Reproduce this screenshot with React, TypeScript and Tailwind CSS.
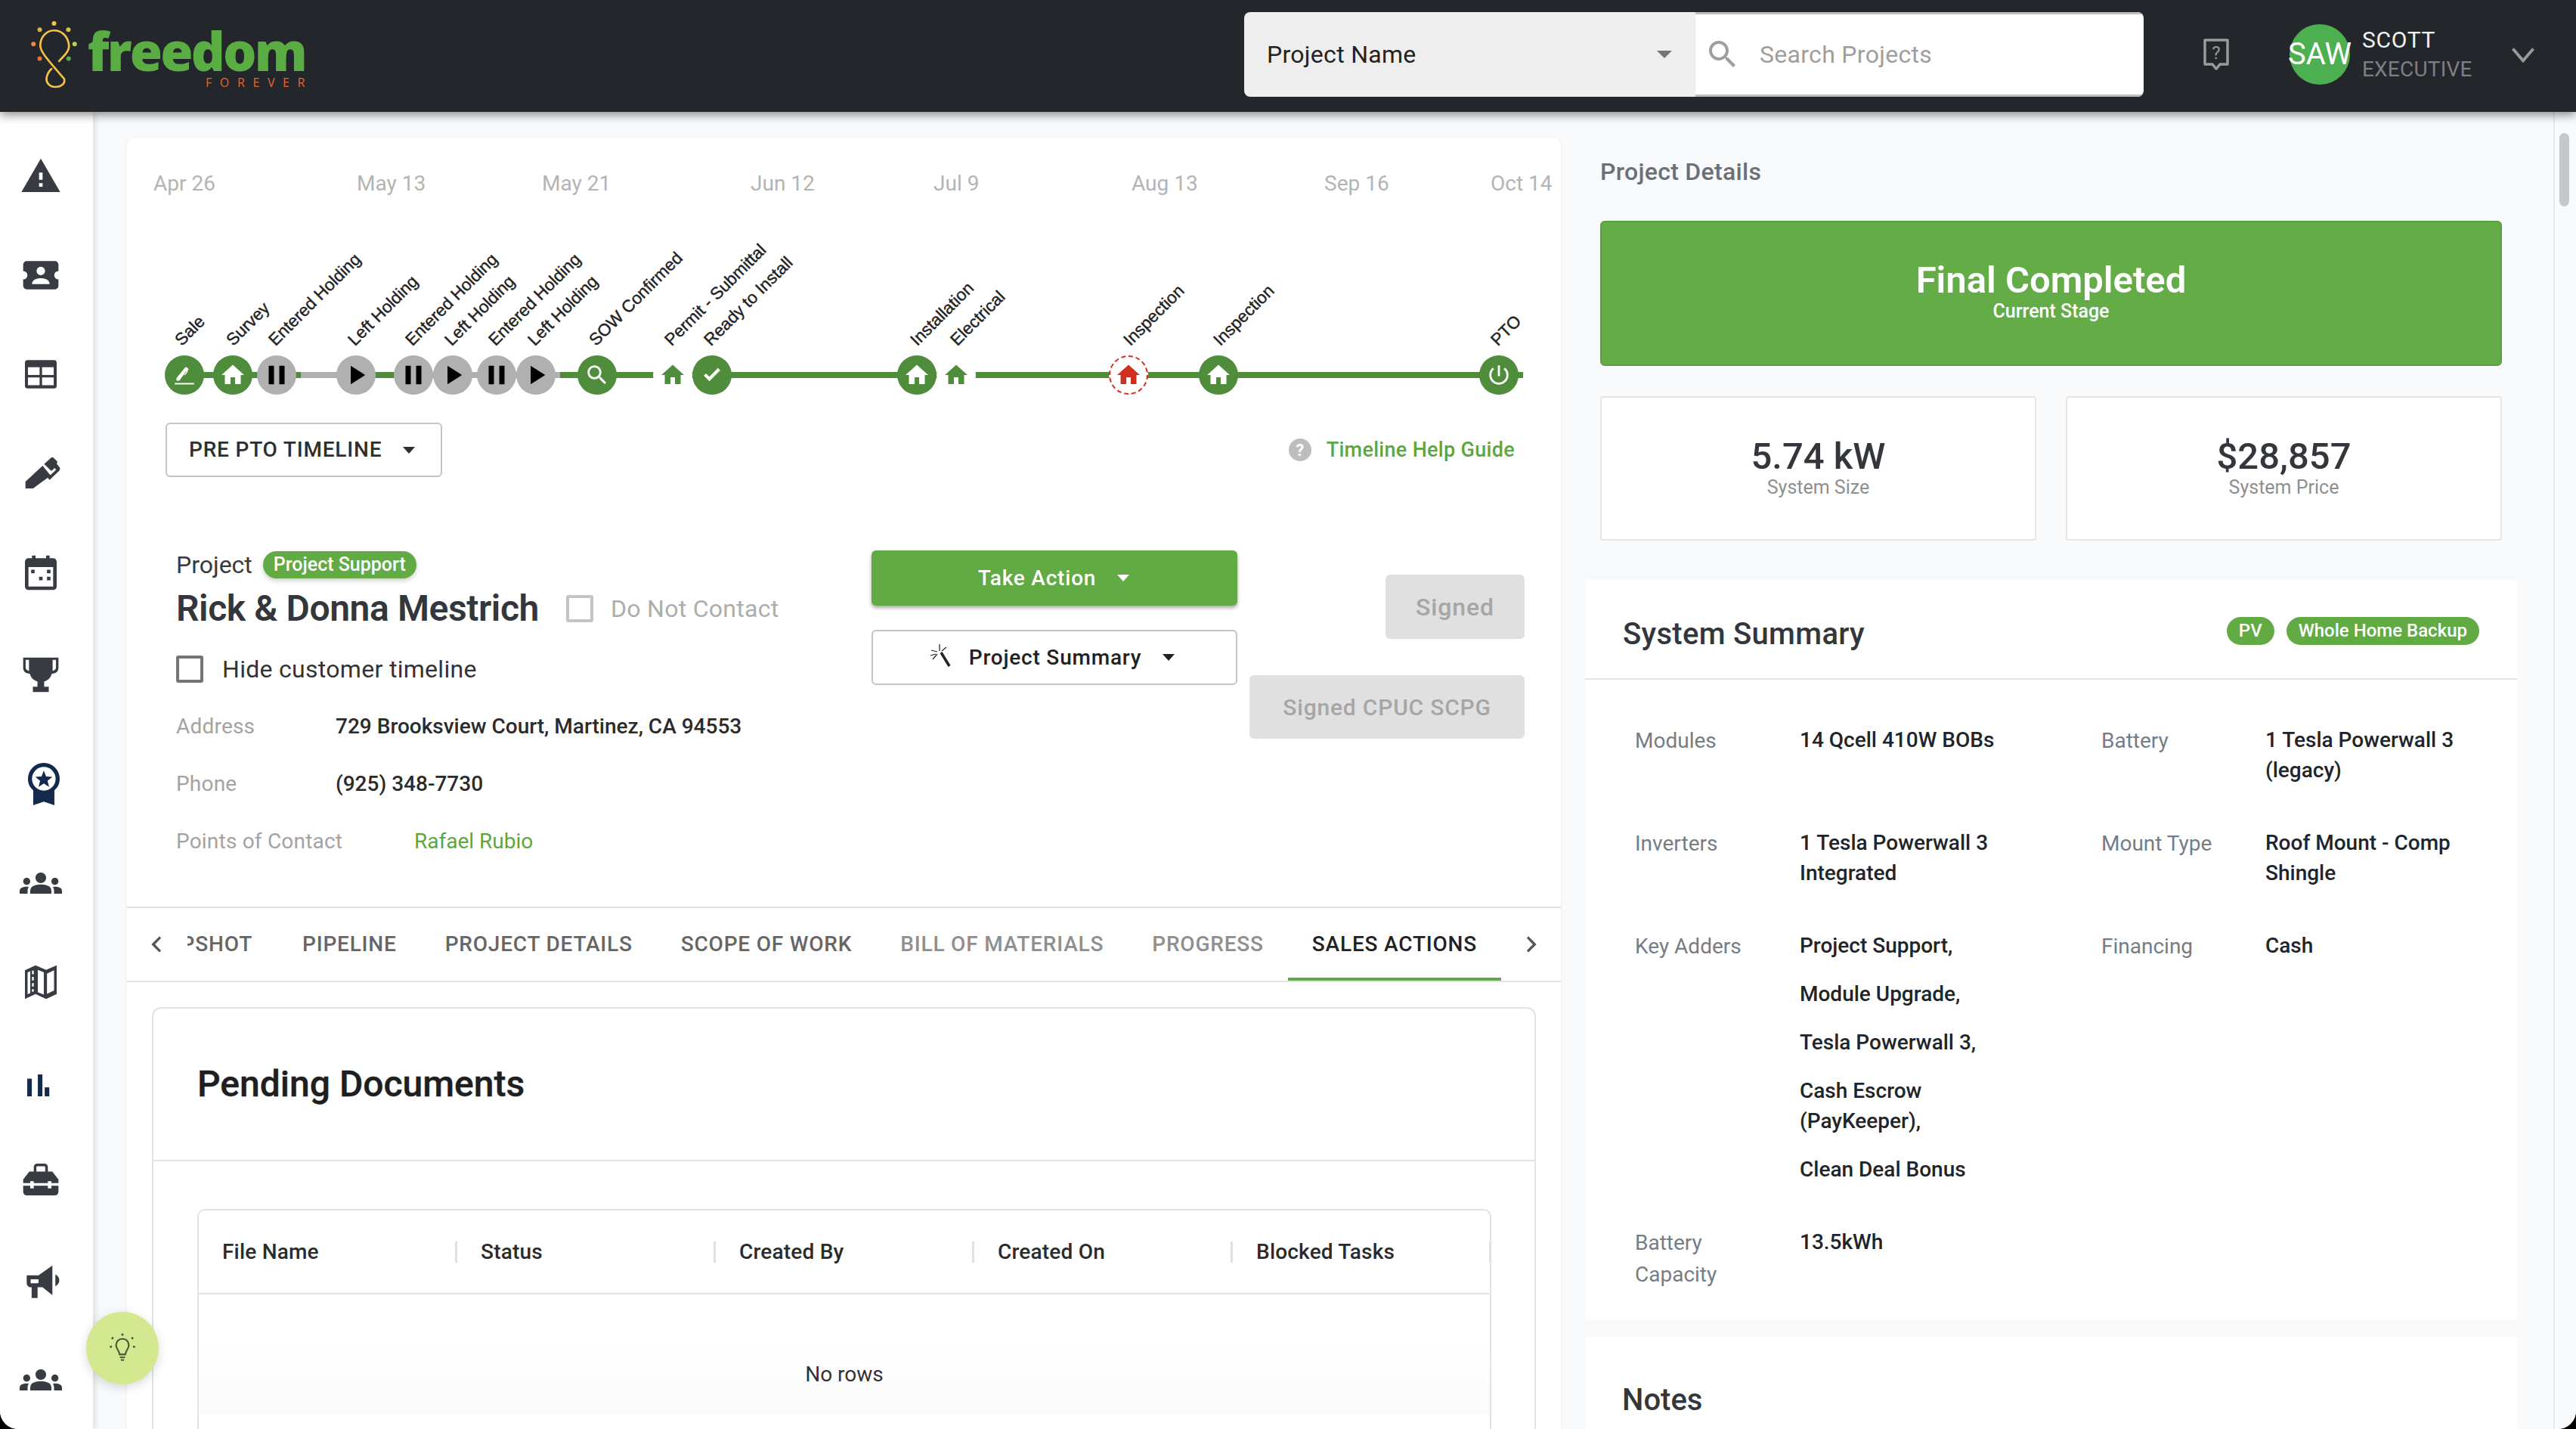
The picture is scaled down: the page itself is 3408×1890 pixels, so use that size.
import type { ReactNode } from "react";

const HOME = "M10 20v-6h4v6h5v-8h3L12 3 2 12h3v8z";
const PAUSE = "M6 19h4V5H6v14zm8-14v14h4V5h-4z";
const PLAY = "M8 5v14l11-7z";
const CHECK = "M9.500 17.800 4.300 12.600l2.100-2.100 3.100 3.100 8-8.200 2.200 2.100z";
const POWER =
  "M13 3h-2v10h2V3zm4.83 2.17-1.42 1.42C17.99 7.86 19 9.81 19 12c0 3.87-3.13 7-7 7s-7-3.13-7-7c0-2.19 1.01-4.14 2.58-5.42L6.17 5.17C4.23 6.82 3 9.26 3 12c0 4.97 4.03 9 9 9s9-4.03 9-9c0-2.74-1.23-5.18-3.17-6.83z";
const SEARCH =
  "M15.5 14h-.79l-.28-.27C15.41 12.59 16 11.11 16 9.5 16 5.91 13.09 3 9.5 3S3 5.91 3 9.5 5.91 16 9.5 16c1.61 0 3.09-.59 4.23-1.57l.27.28v.79l5 4.99L20.49 19l-4.99-5zm-6 0C7.01 14 5 11.99 5 9.5S7.01 5 9.5 5 14 7.01 14 9.5 11.99 14 9.5 14z";
const PEOPLE =
  "M4 13c1.1 0 2-.9 2-2s-.9-2-2-2-2 .9-2 2 .9 2 2 2zm1.13 1.1c-.37-.06-.74-.1-1.13-.1-.99 0-1.93.21-2.78.58C.48 14.9 0 15.62 0 16.43V18h4.5v-1.61c0-.83.23-1.61.63-2.29zM20 13c1.1 0 2-.9 2-2s-.9-2-2-2-2 .9-2 2 .9 2 2 2zm4 3.43c0-.81-.48-1.53-1.22-1.85-.85-.37-1.79-.58-2.78-.58-.39 0-.76.04-1.13.1.4.68.63 1.46.63 2.29V18H24v-1.57zm-7.76-2.78c-1.17-.52-2.61-.9-4.24-.9-1.63 0-3.07.39-4.24.9C6.68 14.13 6 15.21 6 16.39V18h12v-1.61c0-1.18-.68-2.26-1.76-2.74zM12 12c1.66 0 3-1.34 3-3s-1.34-3-3-3-3 1.34-3 3 1.34 3 3 3z";

function Icon({ d, className }: { d: string; className?: string }) {
  return (
    <svg viewBox="0 0 24 24" fill="currentColor" className={className}>
      <path d={d} />
    </svg>
  );
}

function SideIcon({ children, className }: { children: ReactNode; className?: string }) {
  return (
    <div className={"flex h-[60px] w-full shrink-0 items-center justify-center text-[#383c42] " + (className ?? "")}>
      <svg viewBox="0 0 24 24" fill="currentColor" className="h-14 w-14">
        {children}
      </svg>
    </div>
  );
}

function Sidebar() {
  return (
    <div className="z-10 flex h-full w-[123px] shrink-0 flex-col gap-[71px] bg-white pt-[55px] pr-[15px] shadow-[3px_0_8px_rgba(0,0,0,0.12)]">
      <SideIcon>
        <path d="M1 21h22L12 2 1 21zm12-3h-2v-2h2v2zm0-4h-2v-4h2v4z" />
      </SideIcon>
      <SideIcon>
        <path d="M4 4h16a2 2 0 0 1 2 2v3.600a2.400 2.400 0 0 0 0 4.800V18a2 2 0 0 1-2 2H4a2 2 0 0 1-2-2v-3.600a2.400 2.400 0 0 0 0-4.800V6a2 2 0 0 1 2-2z" />
        <circle cx="12" cy="9.600" r="2.400" fill="#fff" />
        <path d="M7 17c0-2.400 2.500-3.300 5-3.300s5 .9 5 3.300z" fill="#fff" />
      </SideIcon>
      <SideIcon>
        <rect x="3" y="4" width="18" height="16" rx="1.500" />
        <rect x="4.700" y="8" width="6.600" height="4.400" fill="#fff" />
        <rect x="12.700" y="8" width="6.600" height="4.400" fill="#fff" />
        <rect x="4.700" y="13.800" width="6.600" height="4.400" fill="#fff" />
        <rect x="12.700" y="13.800" width="6.600" height="4.400" fill="#fff" />
      </SideIcon>
      <SideIcon>
        <path d="M3.300 20.600v-3.900L13 7.700l4.600 5.600-10 7.300z" />
        <path d="M13.900 6.800 18 3h1l2.500 2.500-.5 1 1.900 2.500-.2 1.300-5.700 5.400-1.200-1.200 4.900-4.500-.9-1-1.800 1.700z" />
      </SideIcon>
      <SideIcon>
        <path d="M7 2.500h2V4h6V2.500h2V4h2a2 2 0 0 1 2 2v14a2 2 0 0 1-2 2H5a2 2 0 0 1-2-2V6a2 2 0 0 1 2-2h2zM5 9v11h14V9z" />
        <rect x="6.500" y="10.500" width="2" height="2" />
        <rect x="15.500" y="10.500" width="2" height="2" />
        <rect x="11" y="14.500" width="2" height="2" />
        <rect x="15.500" y="14.500" width="2" height="2" />
      </SideIcon>
      <SideIcon className="mt-[4px]">
        <path d="M2 2.500h20v5.500c0 1.500-.5 2.700-2 3.200l-1.800.5c-.6 2.200-2 3.700-4.300 4.300V19h2.600v3H7.500v-3h2.600v-3c-2.300-.6-3.700-2.100-4.300-4.300L4 11.200C2.500 10.700 2 9.500 2 8zm1.400 1.200V8c0 .8.300 1.400 1.900 2V3.700zm17.200 0h-1.900V10c1.600-.6 1.900-1.200 1.900-2z" />
      </SideIcon>
      <SideIcon className="mt-[14px] !text-[#132a4e]">
        <g transform="translate(1.700 0)">
          <path d="M3 9a9 9 0 1 1 18 0c0 3-1.200 5-3 6.500V24l-6-2-6 2v-8.500C4.200 14 3 12 3 9z" />
          <circle cx="12" cy="9" r="6.700" fill="#fff" />
          <path d="m12 4.400 1.300 3.300 3.500.2-2.700 2.300.9 3.400-3-1.900-3 1.900.9-3.400-2.700-2.300 3.500-.2z" />
        </g>
      </SideIcon>
      <SideIcon>
        <path d={PEOPLE} />
      </SideIcon>
      <SideIcon>
        <path d="M3 5.300 9 2.500l6 2.500 6-2.500v16.200L15 21.500l-6-2.700-6 2.700z" />
        <path d="M4.500 6.500v12.400l1.500-.7V5.800zM7 5.500v2h1v-2zM7 9v2h1V9zM7 12.500v2h1v-2zM7 16v1.600l1-.4V16z" fill="#fff" />
        <path d="M10.300 5v12.700l3.400 1.400V6.400zM15.500 7.200v11.400l4-1.900V5.300z" fill="#fff" />
      </SideIcon>
      <SideIcon className="mt-[6px] !text-[#132a4e]">
        <rect x="4.300" y="8" width="2.600" height="10" />
        <rect x="10.300" y="5.600" width="2.600" height="12.400" />
        <rect x="14.200" y="12.900" width="2.600" height="5.100" />
      </SideIcon>
      <SideIcon className="-mt-[7px]">
        <path d="M8 5a2 2 0 0 1 2-2h4a2 2 0 0 1 2 2v2.500h2.500L22 12v2h-4v-1h-2v1H8v-1H6v1H2v-2l3.500-4.500H8zm1.500 2.500h5V5a.5.5 0 0 0-.5-.5h-4a.5.5 0 0 0-.5.5zM2 15.500h4V17h2v-1.500h8V17h2v-1.500h4V19a2 2 0 0 1-2 2H4a2 2 0 0 1-2-2z" />
      </SideIcon>
      <SideIcon className="mt-[2px]">
        <g transform="translate(1.200 -1.300) scale(1.12)">
          <path d="M2.500 9.500h6L15.500 4.500v15L10.500 15.500H8V21H5v-5.500H4.500a2 2 0 0 1-2-2zm2 2v2H7.500l1-.2v-1.800zM17 9c1.300.6 2 1.700 2 3s-.7 2.400-2 3z" fillRule="evenodd" />
        </g>
      </SideIcon>
      <SideIcon className="mt-[1px]">
        <path d={PEOPLE} />
      </SideIcon>
    </div>
  );
}

function Logo() {
  return (
    <div className="flex items-start self-start pl-[38px]">
      <svg viewBox="50 50 200 280" className="mt-[27px] h-[93px] w-[67px]" fill="none">
        <path
          d="M170 212 L196 184 C208 170 212 156 208 140 C200 106 175 90 150 90 C120 90 96 115 95 150 C96 172 110 190 190 282 C196 300 180 315 155 315 C130 315 118 296 120 280 C122 268 130 252 140 243"
          stroke="#f5c244"
          strokeWidth="8"
          strokeLinecap="round"
        />
        <circle cx="150" cy="62" r="9" fill="#f5c244" />
        <circle cx="93" cy="87" r="9" fill="#e0b044" />
        <circle cx="207" cy="87" r="9" fill="#d9c24a" />
        <circle cx="232" cy="144" r="9" fill="#b5d35c" />
        <circle cx="208" cy="202" r="9" fill="#5aad43" />
        <circle cx="93" cy="202" r="9" fill="#f0703a" />
        <circle cx="68" cy="144" r="9" fill="#f08a4b" />
      </svg>
      <div className="mt-[31px] ml-[9px] flex w-[290px] flex-col items-end">
        <span className="font-['Open_Sans'] text-[70px] leading-[72px] font-extrabold tracking-[-2.800px] text-[#5aad43]">freedom</span>
        <span className="mt-[-4px] mr-[-10px] font-['Open_Sans'] text-[16px] leading-[20px] tracking-[10.600px] text-[#e5672b]">FOREVER</span>
      </div>
    </div>
  );
}

function TopBar() {
  return (
    <div className="z-20 flex h-[148px] shrink-0 items-center bg-[#23262b] pb-[4px] shadow-[0_4px_12px_rgba(0,0,0,0.45)]">
      <Logo />
      <div className="ml-[1242px] flex h-[112px] w-[1190px] overflow-hidden rounded-[8px]">
        <div className="flex w-[597px] items-center justify-between bg-[#eeeeee] pr-[31px] pl-[30px]">
          <span className="text-[32px] tracking-[0.3px] text-[#222]">Project Name</span>
          <span className="h-0 w-0 border-x-[10px] border-t-[10px] border-x-transparent border-t-[#757575]" />
        </div>
        <div className="flex flex-1 items-center border-y-[3px] border-y-[#bdbdbd] bg-white pl-[12px]">
          <Icon d={SEARCH} className="h-[48px] w-[48px] text-[#9e9e9e]" />
          <span className="ml-[25px] text-[32px] tracking-[0.3px] text-[#9e9e9e]">Search Projects</span>
        </div>
      </div>
      <svg viewBox="0 0 36 44" className="ml-[78px] h-[44px] w-[36px] text-[#9a9a9a]" fill="none">
        <path d="M3 3h30v32H23l-5 6-5-6H3z" stroke="currentColor" strokeWidth="3.500" strokeLinejoin="round" />
        <text x="18" y="28" textAnchor="middle" fontSize="24" fill="currentColor" fontFamily="Roboto">?</text>
      </svg>
      <div className="ml-[79px] flex h-[80px] w-[80px] items-center justify-center rounded-full bg-[#4caf50] text-[40px] whitespace-nowrap text-white">SAW</div>
      <div className="ml-[16px] flex w-[190px] flex-col">
        <span className="text-[30px] leading-[40px] tracking-[0.7px] text-[#f2f2f2]">SCOTT</span>
        <span className="text-[28px] leading-[38px] tracking-[0.2px] text-[#7d7f82]">EXECUTIVE</span>
      </div>
      <svg viewBox="0 0 24 24" className="ml-[5px] h-[36px] w-[36px] text-[#9a9a9a]" fill="none" stroke="currentColor" strokeWidth="2.600">
        <path d="m3 7 9 10.500L21 7" />
      </svg>
    </div>
  );
}

const axisDates = [
  { label: "Apr 26", x: 35 },
  { label: "May 13", x: 304 },
  { label: "May 21", x: 549 },
  { label: "Jun 12", x: 825 },
  { label: "Jul 9", x: 1067 },
  { label: "Aug 13", x: 1329 },
  { label: "Sep 16", x: 1584 },
  { label: "Oct 14", x: 1804 },
];

const segments = [
  { from: 76, to: 230, color: "#4f8c3c" },
  { from: 230, to: 303, color: "#b0b0b0" },
  { from: 303, to: 379, color: "#4f8c3c" },
  { from: 379, to: 573, color: "#b0b0b0" },
  { from: 573, to: 1847, color: "#4f8c3c" },
];

type Node = { label: string; x: number; kind: "green" | "gray" | "plain" | "red"; icon: string; dx?: number };

const nodes: Node[] = [
  { label: "Sale", x: 76, kind: "green", icon: "pen", dx: -2 },
  { label: "Survey", x: 140, kind: "green", icon: HOME, dx: 2 },
  { label: "Entered Holding", x: 198, kind: "gray", icon: PAUSE },
  { label: "Left Holding", x: 303, kind: "gray", icon: PLAY },
  { label: "Entered Holding", x: 379, kind: "gray", icon: PAUSE },
  { label: "Left Holding", x: 431, kind: "gray", icon: PLAY },
  { label: "Entered Holding", x: 489, kind: "gray", icon: PAUSE },
  { label: "Left Holding", x: 541, kind: "gray", icon: PLAY },
  { label: "SOW Confirmed", x: 622, kind: "green", icon: SEARCH },
  { label: "Permit - Submittal", x: 722, kind: "plain", icon: HOME },
  { label: "Ready to Install", x: 774, kind: "green", icon: CHECK },
  { label: "Installation", x: 1045, kind: "green", icon: HOME, dx: 2 },
  { label: "Electrical", x: 1097, kind: "plain", icon: HOME, dx: 3 },
  { label: "Inspection", x: 1325, kind: "red", icon: HOME, dx: 4 },
  { label: "Inspection", x: 1444, kind: "green", icon: HOME, dx: 4 },
  { label: "PTO", x: 1815, kind: "green", icon: POWER },
];

function TimelineNode({ node }: { node: Node }) {
  const circle = {
    green: "bg-[#4f8c3c] text-white",
    gray: "bg-[#b0b0b0] text-black",
    plain: "bg-white text-[#4f8c3c]",
    red: "border-2 border-dashed border-[#d0301f] bg-white text-[#d0301f]",
  }[node.kind];
  const size = node.icon === PAUSE || node.icon === PLAY ? "h-[42px] w-[42px]" : node.icon === HOME ? "h-[36px] w-[36px]" : "h-[34px] w-[34px]";
  return (
    <>
      <div
        className={"absolute top-[288px] flex h-[52px] w-[52px] -translate-x-1/2 items-center justify-center rounded-full " + circle}
        style={{ left: node.x }}
      >
        {node.icon === "pen" ? (
          <svg viewBox="0 0 24 24" fill="currentColor" className="h-[36px] w-[36px]">
            <path d="M5 17v-2.400L12.500 5.500c.5-.6 1.200-.5 1.700-.1l.9.7c.5.4.6 1 .2 1.500l-.7 1 .5.4-2.800 3.300-.6-.5 2.200-2.600-.5-.4L7.500 17z" />
            <rect x="3.500" y="19" width="17" height="1.300" />
          </svg>
        ) : (
          <Icon d={node.icon} className={size} />
        )}
      </div>
      <span
        className="absolute top-[256px] origin-bottom-left -rotate-45 font-['Liberation_Sans'] text-[22.500px] leading-[24px] whitespace-nowrap text-[#222] [-webkit-text-stroke:0.4px_#222]"
        style={{ left: node.x + 2 + (node.dx ?? 0) }}
      >
        {node.label}
      </span>
    </>
  );
}

function Timeline() {
  return (
    <div className="relative h-[377px] shrink-0">
      {axisDates.map((d) => (
        <span key={d.label} className="absolute top-[44px] text-[28px] leading-[34px] text-[#b4b4b4]" style={{ left: d.x }}>
          {d.label}
        </span>
      ))}
      {segments.map((s) => (
        <div
          key={s.from}
          className="absolute top-[310px] h-[8px]"
          style={{ left: s.from, width: s.to - s.from, backgroundColor: s.color }}
        />
      ))}
      {nodes.map((n, i) => (
        <TimelineNode key={i} node={n} />
      ))}
    </div>
  );
}

function TimelineControls() {
  return (
    <div className="flex h-[72px] shrink-0 items-center justify-between pr-[61px] pl-[51px]">
      <div className="flex h-full w-[366px] items-center justify-between rounded-[6px] border-2 border-[#c4c4c4] pr-[34px] pl-[29px] text-[28px] font-medium tracking-[0.8px] text-[#2f2f2f]">
        PRE PTO TIMELINE
        <span className="h-0 w-0 border-x-[8px] border-t-[9px] border-x-transparent border-t-[#2f2f2f]" />
      </div>
      <div className="flex items-center">
        <span className="flex h-[30px] w-[30px] items-center justify-center rounded-full bg-[#bdbdbd] text-[22px] font-bold text-white">?</span>
        <span className="ml-[20px] text-[27px] font-medium tracking-[0.3px] text-[#5aa83f]">Timeline Help Guide</span>
      </div>
    </div>
  );
}

function CheckBox({ className }: { className?: string }) {
  return <span className={"inline-block h-[36px] w-[36px] shrink-0 rounded-[3px] border-[4px] " + (className ?? "")} />;
}

function InfoRow({ label, value, valueClass, labelClass }: { label: string; value: string; valueClass: string; labelClass: string }) {
  return (
    <div className="flex h-[40px] items-center text-[28px]">
      <span className={"tracking-[0.2px] text-[#a3a3a3] " + labelClass}>{label}</span>
      <span className={valueClass}>{value}</span>
    </div>
  );
}

function ProjectInfo() {
  return (
    <div className="mt-[96px] flex shrink-0 pr-[48px] pl-[65px]">
      <div className="w-[920px]">
        <div className="flex h-[40px] items-center">
          <span className="text-[32px] text-[#3a3a3a]">Project</span>
          <span className="ml-[14px] flex h-[36px] items-center rounded-full bg-[#61aa44] px-[14px] text-[25px] font-medium text-white shadow-[0_3px_6px_rgba(0,0,0,0.2)]">
            Project Support
          </span>
        </div>
        <div className="mt-[10px] flex h-[56px] items-center">
          <span className="text-[48px] font-semibold tracking-[-0.4px] text-[#33373c]">Rick &amp; Donna Mestrich</span>
          <CheckBox className="ml-[36px] border-[#c4c4c4]" />
          <span className="ml-[23px] text-[32px] tracking-[0.3px] text-[#adadad]">Do Not Contact</span>
        </div>
        <div className="mt-[32px] flex h-[40px] items-center">
          <CheckBox className="border-[#757575]" />
          <span className="ml-[25px] text-[32px] tracking-[0.3px] text-[#333]">Hide customer timeline</span>
        </div>
        <div className="mt-[36px] flex flex-col gap-[36px]">
          <InfoRow label="Address" value="729 Brooksview Court, Martinez, CA 94553" labelClass="w-[211px]" valueClass="font-medium text-[#2b2b2b]" />
          <InfoRow label="Phone" value="(925) 348-7730" labelClass="w-[211px]" valueClass="font-medium text-[#2b2b2b]" />
          <InfoRow label="Points of Contact" value="Rafael Rubio" labelClass="w-[315px]" valueClass="text-[#5aa83f]" />
        </div>
      </div>
      <div className="mt-[1px] flex w-[484px] flex-col gap-[32px]">
        <div className="flex h-[73px] items-center justify-center gap-[28px] rounded-[6px] bg-[#61aa44] pr-[2px] text-[28px] font-medium tracking-[0.8px] text-white shadow-[0_3px_5px_rgba(0,0,0,0.35)]">
          Take Action
          <span className="h-0 w-0 border-x-[8px] border-t-[9px] border-x-transparent border-t-white" />
        </div>
        <div className="flex h-[73px] items-center justify-center rounded-[6px] border-2 border-[#c4c4c4] bg-white pr-[6px] text-[28px] font-medium tracking-[0.8px] text-[#222]">
          <svg viewBox="0 0 30 34" className="mr-[22px] mb-[6px] h-[34px] w-[30px]" fill="none" stroke="#222" strokeWidth="1.200">
            <path d="M13 2v9M2 10l8 2M4 22l6-7M22 6l-6 5M1 17l7-2" />
            <path d="m15 13 11 18" strokeWidth="3.500" />
          </svg>
          Project Summary
          <span className="ml-[28px] h-0 w-0 border-x-[8px] border-t-[9px] border-x-transparent border-t-[#222]" />
        </div>
      </div>
      <div className="flex flex-1 flex-col items-end gap-[48px] pt-[33px]">
        <div className="flex h-[85px] w-[184px] items-center justify-center rounded-[6px] bg-[#e0e0e0] text-[32px] font-medium tracking-[0.9px] text-[#a6a6a6]">Signed</div>
        <div className="flex h-[84px] w-[364px] items-center justify-center rounded-[6px] bg-[#e0e0e0] text-[30px] font-medium tracking-[0.8px] text-[#a6a6a6]">Signed CPUC SCPG</div>
      </div>
    </div>
  );
}

function Tabs() {
  const tabs = [
    { label: "PIPELINE", color: "text-[#666]", active: false },
    { label: "PROJECT DETAILS", color: "text-[#666]", active: false },
    { label: "SCOPE OF WORK", color: "text-[#666]", active: false },
    { label: "BILL OF MATERIALS", color: "text-[#8f8f8f]", active: false },
    { label: "PROGRESS", color: "text-[#8f8f8f]", active: false },
    { label: "SALES ACTIONS", color: "text-[#222]", active: true },
  ];
  return (
    <div className="mt-[66px] flex h-[100px] shrink-0 items-stretch border-y-2 border-y-[#e2e2e6] text-[28px] font-medium tracking-[0.8px]">
      <div className="flex w-[80px] items-center justify-center text-[#555]">
        <svg viewBox="0 0 24 24" className="h-[32px] w-[32px]" fill="none" stroke="currentColor" strokeWidth="2.500">
          <path d="m15 5-7 7 7 7" />
        </svg>
      </div>
      <div className="flex w-[86px] items-center justify-end overflow-hidden whitespace-nowrap text-[#666]">
        <span>SNAPSHOT</span>
      </div>
      <div className="ml-[34px] flex">
        {tabs.map((t) => (
          <div key={t.label} className={"relative flex items-center px-[32px] whitespace-nowrap " + t.color}>
            {t.label}
            {t.active && <span className="absolute right-0 bottom-0 left-0 h-[4px] bg-[#61aa44]" />}
          </div>
        ))}
      </div>
      <div className="flex flex-1 items-center justify-center text-[#555]">
        <svg viewBox="0 0 24 24" className="h-[32px] w-[32px]" fill="none" stroke="currentColor" strokeWidth="2.500">
          <path d="m9 5 7 7-7 7" />
        </svg>
      </div>
    </div>
  );
}

function PendingDocuments() {
  const columns = ["File Name", "Status", "Created By", "Created On", "Blocked Tasks"];
  return (
    <div className="mx-[33px] mt-[33px] flex-1 rounded-t-[12px] border-2 border-b-0 border-[#e3e3e3]">
      <div className="flex h-[202px] items-center border-b-2 border-b-[#e3e3e3] pl-[58px] text-[48px] font-medium text-[#1f1f1f] [-webkit-text-stroke:0.4px_#1f1f1f]">Pending Documents</div>
      <div className="mr-[57px] ml-[58px] mt-[63px] h-[600px] rounded-t-[10px] border-2 border-b-0 border-[#e3e3e3]">
        <div className="grid h-[111px] grid-cols-[repeat(5,342px)] border-b-2 border-b-[#e3e3e3]">
          {columns.map((c) => (
            <div key={c} className="relative flex items-center pl-[31px] text-[28px] font-medium tracking-[0.2px] text-[#2b2b2b]">
              {c}
              <span className="absolute top-[41px] right-0 h-[28px] w-[3px] bg-[#e0e0e0]" />
            </div>
          ))}
        </div>
        <div className="mt-[54px] flex h-[104px] items-center justify-center bg-gradient-to-b from-white to-[#fbfbfb] text-[28px] text-[#333]">No rows</div>
      </div>
    </div>
  );
}

function Stat({ value, label }: { value: string; label: string }) {
  return (
    <div className="flex h-[191px] flex-1 flex-col items-center justify-center rounded-[4px] border-2 border-[#e6e6e6] bg-white pb-[4px]">
      <span className="text-[49px] leading-[54px] font-medium text-[#33373c]">{value}</span>
      <span className="text-[25px] leading-[28px] text-[#8f8f8f]">{label}</span>
    </div>
  );
}

function SummaryItem({ label, children, last }: { label: string; children: ReactNode; last?: boolean }) {
  return (
    <>
      <div className="pr-[40px] text-[28px] leading-[42px] text-[#757d85]">{label}</div>
      <div className={"text-[28px] leading-[40px] font-medium text-[#212529] " + (last ? "pr-[20px]" : "pr-[100px]")}>{children}</div>
    </>
  );
}

function SystemSummary() {
  return (
    <div className="mt-[52px] bg-white pb-[38px]">
      <div className="flex h-[132px] items-center justify-between border-b-2 border-b-[#e4e4e4] px-[50px] pt-[14px]">
        <span className="text-[40px] font-medium tracking-[0.3px] text-[#33373c]">System Summary</span>
        <div className="-mt-[10px] flex gap-[16px] text-[24px] font-medium text-white">
          <span className="flex h-[37px] items-center rounded-full bg-[#61aa44] px-[16px]">PV</span>
          <span className="flex h-[37px] items-center rounded-full bg-[#61aa44] px-[16px]">Whole Home Backup</span>
        </div>
      </div>
      <div className="grid grid-cols-[218px_399px_217px_1fr] gap-y-[56px] pt-[60px] pl-[66px]">
        <SummaryItem label="Modules">14 Qcell 410W BOBs</SummaryItem>
        <SummaryItem label="Battery" last>1 Tesla Powerwall 3 (legacy)</SummaryItem>
        <SummaryItem label="Inverters">1 Tesla Powerwall 3 Integrated</SummaryItem>
        <SummaryItem label="Mount Type" last>Roof Mount - Comp Shingle</SummaryItem>
        <SummaryItem label="Key Adders">
          <div className="flex flex-col gap-[24px]">
            <span>Project Support,</span>
            <span>Module Upgrade,</span>
            <span>Tesla Powerwall 3,</span>
            <span>Cash Escrow (PayKeeper),</span>
            <span>Clean Deal Bonus</span>
          </div>
        </SummaryItem>
        <SummaryItem label="Financing" last>Cash</SummaryItem>
        <SummaryItem label="Battery Capacity">13.5kWh</SummaryItem>
      </div>
    </div>
  );
}

function RightColumn() {
  return (
    <div className="flex h-full w-[1233px] shrink-0 flex-col">
      <div className="px-[20px]">
        <div className="flex h-[110px] items-center pb-[20px] text-[32px] font-medium tracking-[0.3px] text-[#6b7078]">Project Details</div>
        <div className="flex h-[192px] flex-col items-center justify-center rounded-[6px] border-2 border-[#5a9e3f] bg-[#64ac47] pb-[6px] text-white">
          <span className="text-[49px] leading-[54px] font-semibold">Final Completed</span>
          <span className="text-[25px] leading-[28px] font-medium">Current Stage</span>
        </div>
        <div className="mt-[40px] flex gap-[39px]">
          <Stat value="5.74 kW" label="System Size" />
          <Stat value="$28,857" label="System Price" />
        </div>
      </div>
      <SystemSummary />
      <div className="mt-[23px] flex-1 bg-white pt-[60px] pl-[49px] text-[40px] leading-[48px] font-medium text-[#33373c]">Notes</div>
    </div>
  );
}

export default function App() {
  return (
    <div className="h-[1890px] w-[3408px] overflow-hidden bg-black font-['Roboto',sans-serif]">
      <div className="relative flex h-full flex-col overflow-hidden rounded-b-[24px] bg-[#f9fafb]">
        <TopBar />
        <div className="flex min-h-0 flex-1">
          <Sidebar />
          <div className="mt-[34px] ml-[45px] flex w-[1897px] shrink-0 flex-col overflow-hidden rounded-t-[10px] bg-white shadow-[0_0_4px_rgba(0,0,0,0.06)]">
            <Timeline />
            <TimelineControls />
            <ProjectInfo />
            <Tabs />
            <PendingDocuments />
          </div>
          <div className="mt-[34px] ml-[32px]">
            <RightColumn />
          </div>
          <div className="ml-[48px] w-[30px] shrink-0 border-l-2 border-l-[#e6e8ec] bg-[#f9fafb] pt-[28px] pl-[6px]">
            <div className="h-[97px] w-[13px] rounded-full bg-[#c4c7cb]" />
          </div>
        </div>
        <div className="absolute top-[1735px] left-[114px] z-30 flex h-[96px] w-[96px] items-center justify-center rounded-full bg-[#d4e88f] shadow-[0_4px_14px_rgba(0,0,0,0.15)]">
          <svg viewBox="0 0 24 24" className="h-[42px] w-[42px] text-[#3f5a3a]" fill="none" stroke="currentColor" strokeWidth="1.200">
            <path d="M12 5c-3 0-4.800 2.200-4.800 4.800 0 2.600 2.300 4 2.600 7h4.400c.3-3 2.600-4.400 2.600-7C16.800 7.200 15 5 12 5zM10 19h4M10.800 21h2.400" />
            <path d="M12 1v1.500M4 4l1 1M20 4l-1 1M2.500 11H4M20 11h1.500" strokeWidth="1.500" />
          </svg>
        </div>
      </div>
    </div>
  );
}
